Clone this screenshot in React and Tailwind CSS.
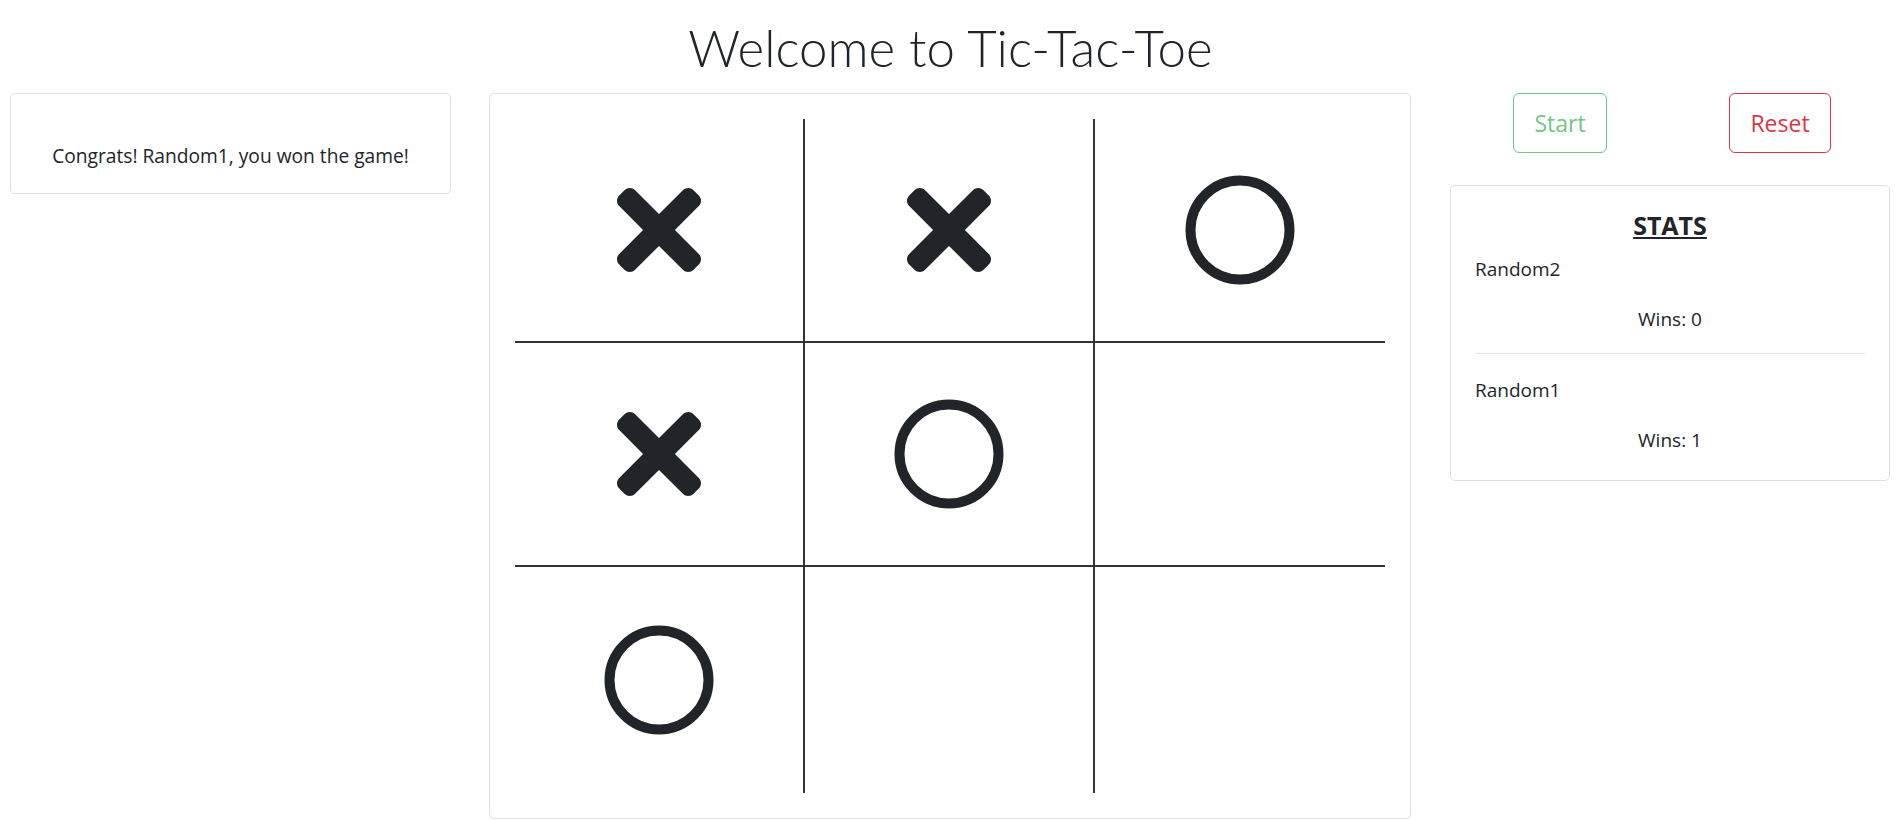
const board = ["x", "x", "o", "x", "o", "", "o", "", ""];

function Cross() {
  return (
    <svg width="84" height="84" viewBox="0 80 352 352" fill="#212529">
      <path d="M242.72 256l100.07-100.07c12.28-12.28 12.28-32.19 0-44.48l-22.24-22.24c-12.28-12.28-32.19-12.28-44.48 0L176 189.28 75.93 89.21c-12.28-12.28-32.19-12.28-44.48 0L9.21 111.45c-12.28 12.28-12.28 32.19 0 44.48L109.28 256 9.21 356.07c-12.28 12.28-12.28 32.19 0 44.48l22.24 22.24c12.28 12.28 32.2 12.28 44.48 0L176 322.72l100.07 100.07c12.28 12.28 32.2 12.28 44.48 0l22.24-22.24c12.28-12.28 12.28-32.19 0-44.48L242.72 256z" />
    </svg>
  );
}

function Circle() {
  return (
    <svg width="110" height="110" viewBox="0 0 110 110" fill="none">
      <circle cx="55" cy="55" r="49.5" stroke="#212529" strokeWidth="10" />
    </svg>
  );
}

export default function App() {
  return (
    <div
      className="min-h-screen bg-white text-[#212529]"
      style={{ fontFamily: '"Open Sans", "Noto Sans", sans-serif' }}
    >
      <h1
        className="text-center text-[51px] font-light leading-[72px] pt-[12px] mb-[9px]"
        style={{ fontFamily: 'Lato, "Open Sans", sans-serif' }}
      >
        Welcome to Tic-Tac-Toe
      </h1>

      <div className="flex items-start px-[10px]">
        {/* message */}
        <div className="w-[441px] border border-[#dfdfdf] rounded-[5px] pt-[47px] pb-[22px] text-center text-[19.2px] leading-[30px]">
          Congrats! Random1, you won the game!
        </div>

        {/* board */}
        <div className="w-[922px] ml-[38px] border border-[#dfdfdf] rounded-[5px] p-[25px]">
          <div className="grid grid-cols-[290px_290px_290px] grid-rows-[224px_224px_226px]">
            {board.map((v, i) => (
              <div
                key={i}
                className={
                  "flex items-center justify-center border-[#333333] " +
                  (i % 3 !== 2 ? "border-r-2 " : "") +
                  (i < 6 ? "border-b-2" : "")
                }
              >
                {v === "x" && <Cross />}
                {v === "o" && <Circle />}
              </div>
            ))}
          </div>
        </div>

        {/* controls + stats */}
        <div className="w-[440px] ml-[39px]">
          <div className="grid grid-cols-2 mb-[32px]">
            <div className="flex justify-center">
              <button
                disabled
                className="h-[60px] px-[20px] border border-[#28a745] text-[#28a745] opacity-65 rounded-[6px] text-[23px]"
              >
                Start
              </button>
            </div>
            <div className="flex justify-center">
              <button className="h-[60px] px-[20px] border border-[#dc3545] text-[#dc3545] rounded-[6px] text-[23px]">
                Reset
              </button>
            </div>
          </div>

          <div className="border border-[#dfdfdf] rounded-[5px] px-[24px] pt-[24px] pb-[25px] text-[19px] leading-[30px]">
            <h4 className="text-center text-[25px] font-bold underline leading-[30px] mb-[14px]">
              STATS
            </h4>
            <div>Random2</div>
            <div className="text-center mt-[20px]">Wins: 0</div>
            <hr className="border-t border-[#e5e5e5] mt-[19px] mb-[21px]" />
            <div>Random1</div>
            <div className="text-center mt-[20px]">Wins: 1</div>
          </div>
        </div>
      </div>
    </div>
  );
}
